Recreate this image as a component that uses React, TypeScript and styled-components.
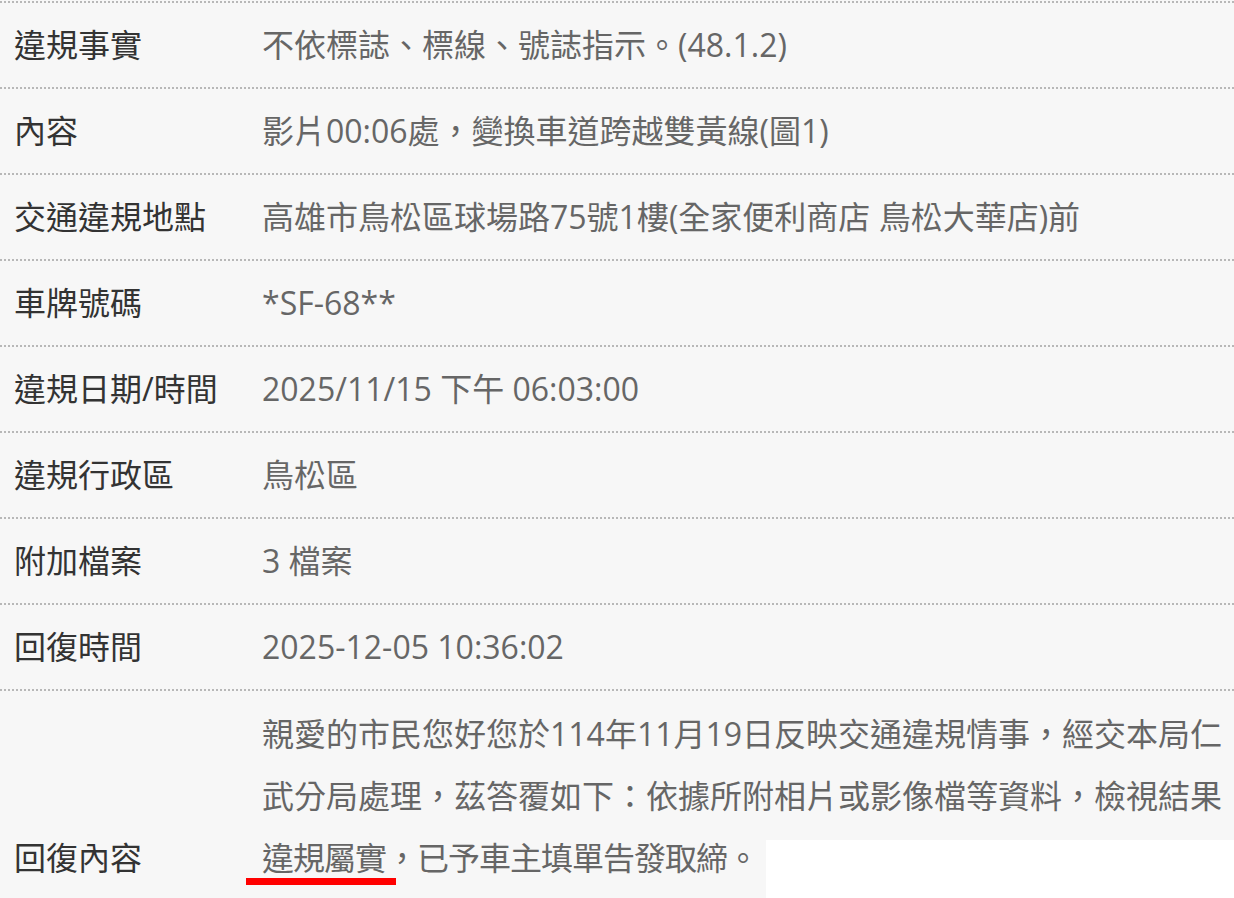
import React from "react";
import styled, { createGlobalStyle } from "styled-components";

const Global = createGlobalStyle`
  html, body { margin: 0; padding: 0; background: #f7f7f7; }
  body {
    font-family: "Open Sans", "Noto Sans CJK TC", "Noto Sans", sans-serif;
    overflow: hidden;
  }
`;

const Table = styled.div`
  padding-top: 1px;
  background: #f7f7f7;
  height: 897px;
  overflow: hidden;
`;

const Row = styled.div<{ $tall?: boolean }>`
  position: relative;
  display: grid;
  grid-template-columns: 262px 1fr;
  border-top: 2px dotted #b8b8b8;
  height: ${(p) => (p.$tall ? "auto" : "84px")};
  align-items: ${(p) => (p.$tall ? "end" : "center")};
  padding-top: ${(p) => (p.$tall ? "12px" : "0")};
`;

const Label = styled.div`
  padding-left: 14px;
  font-size: 32px;
  line-height: 62px;
  color: #333;
  white-space: nowrap;
`;

const Value = styled.div`
  font-size: 32px;
  line-height: 62px;
  color: #666;
  white-space: nowrap;
`;

const Para = styled.div`
  padding-right: 13px;
  font-size: 32px;
  line-height: 62px;
  color: #666;
`;

const Line = styled.div<{ $last?: boolean }>`
  white-space: nowrap;
  text-align: ${(p) => (p.$last ? "left" : "justify")};
  text-align-last: ${(p) => (p.$last ? "left" : "justify")};
  text-justify: inter-character;
  letter-spacing: ${(p) => (p.$last ? "-1px" : "0")};
`;

const Marked = styled.span`
  position: relative;
  display: inline-block;
  &::after {
    content: "";
    position: absolute;
    left: -16px;
    top: 51px;
    width: 150px;
    height: 7px;
    background: #ff0000;
  }
`;

const WhitePatch = styled.div`
  position: absolute;
  left: 766px;
  top: 149px;
  right: 0;
  height: 120px;
  background: #ffffff;
`;

const rows: [string, string][] = [
  ["違規事實", "不依標誌、標線、號誌指示。(48.1.2)"],
  ["內容", "影片00:06處，變換車道跨越雙黃線(圖1)"],
  ["交通違規地點", "高雄市鳥松區球場路75號1樓(全家便利商店 鳥松大華店)前"],
  ["車牌號碼", "*SF-68**"],
  ["違規日期/時間", "2025/11/15 下午 06:03:00"],
  ["違規行政區", "鳥松區"],
  ["附加檔案", "3 檔案"],
  ["回復時間", "2025-12-05 10:36:02"],
];

export default function App() {
  return (
    <>
      <Global />
      <Table>
        {rows.map(([k, v]) => (
          <Row key={k}>
            <Label>{k}</Label>
            <Value>{v}</Value>
          </Row>
        ))}
        <Row $tall>
          <Label>回復內容</Label>
          <Para>
            <Line>親愛的市民您好您於114年11月19日反映交通違規情事，經交本局仁</Line>
            <Line>武分局處理，茲答覆如下：依據所附相片或影像檔等資料，檢視結果</Line>
            <Line $last>
              <Marked>違規屬實</Marked>，已予車主填單告發取締。
            </Line>
          </Para>
          <WhitePatch />
        </Row>
      </Table>
    </>
  );
}
